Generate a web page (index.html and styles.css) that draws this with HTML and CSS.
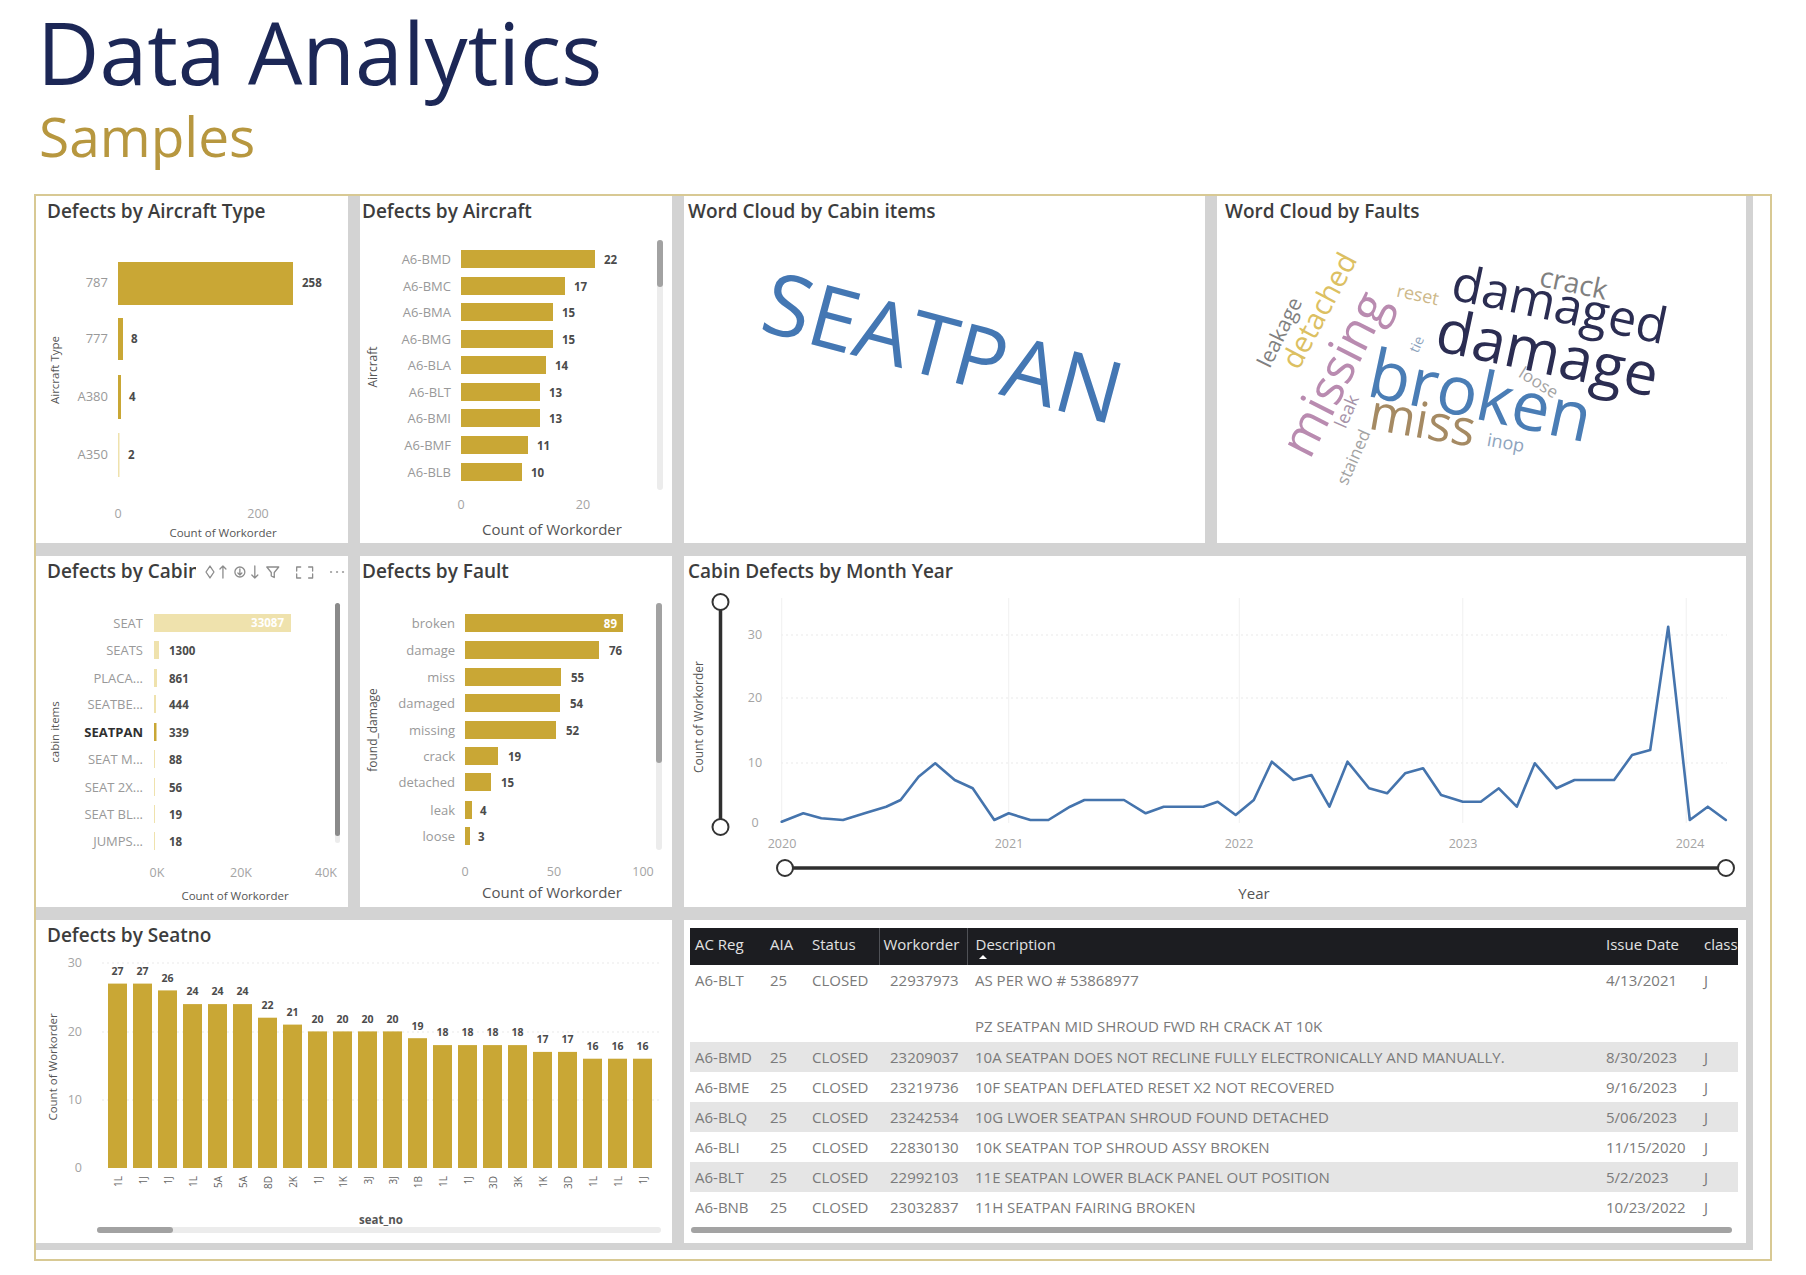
FILE: index.html
```html
<!DOCTYPE html>
<html lang="en">
<head>
<meta charset="utf-8">
<title>Data Analytics – Samples</title>
<link rel="stylesheet" href="styles.css">
</head>
<body>
<header class="page-head">
  <h1 class="title">Data Analytics</h1>
  <h2 class="subtitle">Samples</h2>
</header>

<main class="frame">
  <div class="board">

    <!-- Defects by Aircraft Type -->
    <section class="panel">
      <h3 class="ptitle pad-l">Defects by Aircraft Type</h3>
      <svg class="chart" viewBox="0 30 312 317">
        <rect class="bar" x="82" y="66" width="175" height="43"/>
        <rect class="bar" x="82" y="122" width="5" height="42"/>
        <rect class="bar" x="82" y="179" width="3" height="44"/>
        <rect class="bar pale" x="82" y="237" width="1.5" height="44"/>
        <text class="c-lbl" x="72" y="91" text-anchor="end">787</text>
        <text class="c-lbl" x="72" y="147" text-anchor="end">777</text>
        <text class="c-lbl" x="72" y="205" text-anchor="end">A380</text>
        <text class="c-lbl" x="72" y="263" text-anchor="end">A350</text>
        <text class="c-val" x="266" y="91">258</text>
        <text class="c-val" x="95" y="147">8</text>
        <text class="c-val" x="93" y="205">4</text>
        <text class="c-val" x="92" y="263">2</text>
        <text class="c-ax" x="82" y="322" text-anchor="middle">0</text>
        <text class="c-ax" x="222" y="322" text-anchor="middle">200</text>
        <text class="c-axt sm" x="187" y="341" text-anchor="middle">Count of Workorder</text>
        <text class="c-axt sm" transform="translate(23 174) rotate(-90)" text-anchor="middle">Aircraft Type</text>
      </svg>
    </section>

    <!-- Defects by Aircraft -->
    <section class="panel">
      <h3 class="ptitle pad-s">Defects by Aircraft</h3>
      <svg class="chart" viewBox="0 30 312 317">
        <rect class="bar" x="101" y="54" width="134" height="18"/>
        <rect class="bar" x="101" y="81" width="104" height="18"/>
        <rect class="bar" x="101" y="107" width="92" height="18"/>
        <rect class="bar" x="101" y="134" width="92" height="18"/>
        <rect class="bar" x="101" y="160" width="85" height="18"/>
        <rect class="bar" x="101" y="187" width="79" height="18"/>
        <rect class="bar" x="101" y="213" width="79" height="18"/>
        <rect class="bar" x="101" y="240" width="67" height="18"/>
        <rect class="bar" x="101" y="267" width="61" height="18"/>
        <text class="c-lbl" x="91" y="67.5" text-anchor="end">A6-BMD</text>
        <text class="c-lbl" x="91" y="94.5" text-anchor="end">A6-BMC</text>
        <text class="c-lbl" x="91" y="120.5" text-anchor="end">A6-BMA</text>
        <text class="c-lbl" x="91" y="147.5" text-anchor="end">A6-BMG</text>
        <text class="c-lbl" x="91" y="173.5" text-anchor="end">A6-BLA</text>
        <text class="c-lbl" x="91" y="200.5" text-anchor="end">A6-BLT</text>
        <text class="c-lbl" x="91" y="226.5" text-anchor="end">A6-BMI</text>
        <text class="c-lbl" x="91" y="253.5" text-anchor="end">A6-BMF</text>
        <text class="c-lbl" x="91" y="280.5" text-anchor="end">A6-BLB</text>
        <text class="c-val" x="244" y="67.5">22</text>
        <text class="c-val" x="214" y="94.5">17</text>
        <text class="c-val" x="202" y="120.5">15</text>
        <text class="c-val" x="202" y="147.5">15</text>
        <text class="c-val" x="195" y="173.5">14</text>
        <text class="c-val" x="189" y="200.5">13</text>
        <text class="c-val" x="189" y="226.5">13</text>
        <text class="c-val" x="177" y="253.5">11</text>
        <text class="c-val" x="171" y="280.5">10</text>
        <text class="c-ax" x="101" y="313" text-anchor="middle">0</text>
        <text class="c-ax" x="223" y="313" text-anchor="middle">20</text>
        <text class="c-axt lg" x="192" y="339" text-anchor="middle">Count of Workorder</text>
        <text class="c-axt" transform="translate(17 171) rotate(-90)" text-anchor="middle">Aircraft</text>
        <rect class="track" x="297" y="44" width="6" height="250" rx="3"/>
        <rect class="thumb" x="297" y="44" width="6" height="47" rx="3"/>
      </svg>
    </section>

    <!-- Word Cloud by Cabin items -->
    <section class="panel">
      <h3 class="ptitle">Word Cloud by Cabin items</h3>
      <svg class="chart wc" viewBox="0 30 521 317">
        <text class="w-seat" transform="translate(260 149) rotate(15)">SEATPAN</text>
      </svg>
    </section>

    <!-- Word Cloud by Faults -->
    <section class="panel">
      <h3 class="ptitle pad-m">Word Cloud by Faults</h3>
      <svg class="chart wc" viewBox="0 30 529 317">
        <text class="w navy" font-size="50" transform="translate(343 107) rotate(12)">damaged</text>
        <text class="w navy" font-size="60" transform="translate(331 155) rotate(12)">damage</text>
        <text class="w blue" font-size="68" transform="translate(264 197) rotate(12)">broken</text>
        <text class="w pink" font-size="50" transform="translate(116 177) rotate(-63)">missing</text>
        <text class="w gold" font-size="29" transform="translate(101 114) rotate(-62)">detached</text>
        <text class="w grey" font-size="21" transform="translate(62 136) rotate(-64)">leakage</text>
        <text class="w grey" font-size="28" transform="translate(357 86) rotate(12)">crack</text>
        <text class="w sand" font-size="18" transform="translate(201 98) rotate(12)">reset</text>
        <text class="w tan" font-size="50" transform="translate(206 223) rotate(10)">miss</text>
        <text class="w lgrey" font-size="17" transform="translate(322 186) rotate(32)">loose</text>
        <text class="w steel" font-size="18" transform="translate(289 246) rotate(10)">inop</text>
        <text class="w mauve" font-size="18" transform="translate(129 215) rotate(-66)">leak</text>
        <text class="w lgrey" font-size="17" transform="translate(136 261) rotate(-66)">stained</text>
        <text class="w steel" font-size="14" transform="translate(199 148) rotate(-66)">tie</text>
      </svg>
    </section>

    <!-- Defects by Cabin items -->
    <section class="panel">
      <div class="ptitle pad-l vhead">
        <h3 class="clip">Defects by Cabin items</h3>
        <svg class="vh-icons" viewBox="0 0 145 20" width="145" height="20">
          <g fill="none" stroke="#8c8c8c" stroke-width="1.3" stroke-linecap="round" stroke-linejoin="round">
            <path d="M6 4 L10 10 L6 16 L2 10 Z"/>
            <path d="M19 16 V4 M16 7 L19 4 L22 7"/>
            <circle cx="36" cy="10" r="5"/>
            <path d="M36 7 V13 M34 11 L36 13 L38 11"/>
            <path d="M51 4 V16 M48 13 L51 16 L54 13"/>
            <path d="M63 5 H75 L70.5 10.5 V15.5 L67.5 14 V10.5 Z"/>
            <path d="M97 5 H93 V9 M105 5 H109 V9 M97 16 H93 V12 M105 16 H109 V12"/>
            <path d="M127 10 H128 M133 10 H134 M139 10 H140"/>
          </g>
        </svg>
      </div>
      <svg class="chart" viewBox="0 30 312 321">
        <rect class="bar pale" x="118" y="58" width="137" height="18"/>
        <rect class="bar pale" x="118" y="85" width="5" height="18"/>
        <rect class="bar pale" x="118" y="113" width="3" height="18"/>
        <rect class="bar pale" x="118" y="139" width="2" height="18"/>
        <rect class="bar" x="118" y="167" width="2.5" height="18"/>
        <rect class="bar pale" x="118" y="194" width="1" height="18"/>
        <rect class="bar pale" x="118" y="222" width="1" height="18"/>
        <rect class="bar pale" x="118" y="249" width="1" height="18"/>
        <rect class="bar pale" x="118" y="276" width="1" height="18"/>
        <text class="c-val in" x="248" y="71" text-anchor="end">33087</text>
        <text class="c-lbl" x="107" y="71.5" text-anchor="end">SEAT</text>
        <text class="c-lbl" x="107" y="98.5" text-anchor="end">SEATS</text>
        <text class="c-lbl" x="107" y="126.5" text-anchor="end">PLACA...</text>
        <text class="c-lbl" x="107" y="152.5" text-anchor="end">SEATBE...</text>
        <text class="c-lbl strong" x="107" y="180.5" text-anchor="end">SEATPAN</text>
        <text class="c-lbl" x="107" y="207.5" text-anchor="end">SEAT M...</text>
        <text class="c-lbl" x="107" y="235.5" text-anchor="end">SEAT 2X...</text>
        <text class="c-lbl" x="107" y="262.5" text-anchor="end">SEAT BL...</text>
        <text class="c-lbl" x="107" y="289.5" text-anchor="end">JUMPS...</text>
        <text class="c-val" x="133" y="98.5">1300</text>
        <text class="c-val" x="133" y="126.5">861</text>
        <text class="c-val" x="133" y="152.5">444</text>
        <text class="c-val" x="133" y="180.5">339</text>
        <text class="c-val" x="133" y="207.5">88</text>
        <text class="c-val" x="133" y="235.5">56</text>
        <text class="c-val" x="133" y="262.5">19</text>
        <text class="c-val" x="133" y="289.5">18</text>
        <text class="c-ax" x="121" y="321" text-anchor="middle">0K</text>
        <text class="c-ax" x="205" y="321" text-anchor="middle">20K</text>
        <text class="c-ax" x="290" y="321" text-anchor="middle">40K</text>
        <text class="c-axt sm" x="199" y="344" text-anchor="middle">Count of Workorder</text>
        <text class="c-axt sm" transform="translate(23 176) rotate(-90)" text-anchor="middle">cabin items</text>
        <rect class="track" x="299" y="47" width="5" height="240" rx="2.5"/>
        <rect class="thumb dark" x="299" y="47" width="5" height="233" rx="2.5"/>
      </svg>
    </section>

    <!-- Defects by Fault -->
    <section class="panel">
      <h3 class="ptitle pad-s">Defects by Fault</h3>
      <svg class="chart" viewBox="0 30 312 321">
        <rect class="bar" x="105" y="58" width="158" height="18"/>
        <rect class="bar" x="105" y="85" width="134" height="18"/>
        <rect class="bar" x="105" y="112" width="96" height="18"/>
        <rect class="bar" x="105" y="138" width="95" height="18"/>
        <rect class="bar" x="105" y="165" width="91" height="18"/>
        <rect class="bar" x="105" y="191" width="33" height="18"/>
        <rect class="bar" x="105" y="217" width="26" height="18"/>
        <rect class="bar" x="105" y="245" width="7" height="18"/>
        <rect class="bar" x="105" y="271" width="5" height="18"/>
        <text class="c-lbl" x="95" y="71.5" text-anchor="end">broken</text>
        <text class="c-lbl" x="95" y="98.5" text-anchor="end">damage</text>
        <text class="c-lbl" x="95" y="125.5" text-anchor="end">miss</text>
        <text class="c-lbl" x="95" y="151.5" text-anchor="end">damaged</text>
        <text class="c-lbl" x="95" y="178.5" text-anchor="end">missing</text>
        <text class="c-lbl" x="95" y="204.5" text-anchor="end">crack</text>
        <text class="c-lbl" x="95" y="230.5" text-anchor="end">detached</text>
        <text class="c-lbl" x="95" y="258.5" text-anchor="end">leak</text>
        <text class="c-lbl" x="95" y="284.5" text-anchor="end">loose</text>
        <text class="c-val in" x="257" y="71.5" text-anchor="end">89</text>
        <text class="c-val" x="249" y="98.5">76</text>
        <text class="c-val" x="211" y="125.5">55</text>
        <text class="c-val" x="210" y="151.5">54</text>
        <text class="c-val" x="206" y="178.5">52</text>
        <text class="c-val" x="148" y="204.5">19</text>
        <text class="c-val" x="141" y="230.5">15</text>
        <text class="c-val" x="120" y="258.5">4</text>
        <text class="c-val" x="118" y="284.5">3</text>
        <text class="c-ax" x="105" y="320" text-anchor="middle">0</text>
        <text class="c-ax" x="194" y="320" text-anchor="middle">50</text>
        <text class="c-ax" x="283" y="320" text-anchor="middle">100</text>
        <text class="c-axt lg" x="192" y="342" text-anchor="middle">Count of Workorder</text>
        <text class="c-axt" transform="translate(17 174) rotate(-90)" text-anchor="middle">found_damage</text>
        <rect class="track" x="296" y="47" width="6" height="247" rx="3"/>
        <rect class="thumb" x="296" y="47" width="6" height="160" rx="3"/>
      </svg>
    </section>

    <!-- Cabin Defects by Month Year -->
    <section class="panel span2">
      <h3 class="ptitle">Cabin Defects by Month Year</h3>
      <svg class="chart" viewBox="3 28 1062 321">
        <g class="grid">
          <line x1="100" y1="77" x2="1046" y2="77"/>
          <line x1="100" y1="140" x2="1046" y2="140"/>
          <line x1="100" y1="205" x2="1046" y2="205"/>
        </g>
        <g class="vgrid">
          <line x1="100.7" y1="40" x2="100.7" y2="265"/>
          <line x1="327.7" y1="40" x2="327.7" y2="265"/>
          <line x1="558.3" y1="40" x2="558.3" y2="265"/>
          <line x1="781.8" y1="40" x2="781.8" y2="265"/>
          <line x1="1005.2" y1="40" x2="1005.2" y2="265"/>
        </g>
        <text class="c-ax" x="74" y="81" text-anchor="middle">30</text>
        <text class="c-ax" x="74" y="144" text-anchor="middle">20</text>
        <text class="c-ax" x="74" y="209" text-anchor="middle">10</text>
        <text class="c-ax" x="74" y="269" text-anchor="middle">0</text>
        <text class="c-ax" x="101" y="290" text-anchor="middle">2020</text>
        <text class="c-ax" x="328" y="290" text-anchor="middle">2021</text>
        <text class="c-ax" x="558" y="290" text-anchor="middle">2022</text>
        <text class="c-ax" x="782" y="290" text-anchor="middle">2023</text>
        <text class="c-ax" x="1009" y="290" text-anchor="middle">2024</text>
        <text class="c-axt" transform="translate(22 159) rotate(-90)" text-anchor="middle">Count of Workorder</text>
        <polyline class="trend" points="100.7,263.7 122.3,255.3 140.3,260.3 162,262 183.6,255.3 205.2,248.7 219.6,242 237.6,218.7 254.2,205.3 273.7,222 291.7,230.3 313.3,262 327.7,255.3 349.4,262 367.4,262 389,248.7 403.4,242 421.4,242 443,242 464.7,255.3 482.7,248.7 500.7,248.7 522.3,248.7 536.7,243.7 554.7,257 572.8,242 590.8,203.7 612.4,222 630.4,217 648.4,248.7 666.5,203.7 688.1,230.3 706.1,235.3 724.1,215.3 742.1,210.3 760.1,237 781.8,243.7 799.8,243.7 817.8,230.3 835.8,248.7 853.8,205.3 875.5,230.3 893.5,222 911.5,222 933.1,222 951.1,197 969.2,192 987.2,68.7 1008.8,262 1026.8,248.7 1044.8,262"/>
        <line class="slider" x1="39.5" y1="44" x2="39.5" y2="269"/>
        <circle class="knob" cx="39.5" cy="44" r="8"/>
        <circle class="knob" cx="39.5" cy="269" r="8"/>
        <line class="slider" x1="104" y1="310" x2="1045" y2="310"/>
        <circle class="knob" cx="104" cy="310" r="8"/>
        <circle class="knob" cx="1045" cy="310" r="8"/>
        <text class="c-axt lg" x="573" y="341" text-anchor="middle">Year</text>
      </svg>
    </section>

    <!-- Defects by Seatno -->
    <section class="panel span2a">
      <h3 class="ptitle pad-l">Defects by Seatno</h3>
      <svg class="chart" viewBox="0 30 636 293">
        <g class="grid">
          <line x1="66" y1="43" x2="625" y2="43"/>
          <line x1="66" y1="112" x2="625" y2="112"/>
          <line x1="66" y1="180" x2="625" y2="180"/>
        </g>
        <text class="c-ax" x="46" y="47" text-anchor="end">30</text>
        <text class="c-ax" x="46" y="116" text-anchor="end">20</text>
        <text class="c-ax" x="46" y="184" text-anchor="end">10</text>
        <text class="c-ax" x="46" y="252" text-anchor="end">0</text>
        <g class="bars">
          <rect class="bar" x="72" y="63.6" width="19" height="184.4"/>
          <rect class="bar" x="97" y="63.6" width="19" height="184.4"/>
          <rect class="bar" x="122" y="70.4" width="19" height="177.6"/>
          <rect class="bar" x="147" y="84.1" width="19" height="163.9"/>
          <rect class="bar" x="172" y="84.1" width="19" height="163.9"/>
          <rect class="bar" x="197" y="84.1" width="19" height="163.9"/>
          <rect class="bar" x="222" y="97.7" width="19" height="150.3"/>
          <rect class="bar" x="247" y="104.6" width="19" height="143.4"/>
          <rect class="bar" x="272" y="111.4" width="19" height="136.6"/>
          <rect class="bar" x="297" y="111.4" width="19" height="136.6"/>
          <rect class="bar" x="322" y="111.4" width="19" height="136.6"/>
          <rect class="bar" x="347" y="111.4" width="19" height="136.6"/>
          <rect class="bar" x="372" y="118.2" width="19" height="129.8"/>
          <rect class="bar" x="397" y="125.1" width="19" height="122.9"/>
          <rect class="bar" x="422" y="125.1" width="19" height="122.9"/>
          <rect class="bar" x="447" y="125.1" width="19" height="122.9"/>
          <rect class="bar" x="472" y="125.1" width="19" height="122.9"/>
          <rect class="bar" x="497" y="131.9" width="19" height="116.1"/>
          <rect class="bar" x="522" y="131.9" width="19" height="116.1"/>
          <rect class="bar" x="547" y="138.7" width="19" height="109.3"/>
          <rect class="bar" x="572" y="138.7" width="19" height="109.3"/>
          <rect class="bar" x="597" y="138.7" width="19" height="109.3"/>
        </g>
        <g class="c-val sm" text-anchor="middle">
          <text x="81.5" y="55">27</text>
          <text x="106.5" y="55">27</text>
          <text x="131.5" y="62">26</text>
          <text x="156.5" y="75">24</text>
          <text x="181.5" y="75">24</text>
          <text x="206.5" y="75">24</text>
          <text x="231.5" y="89">22</text>
          <text x="256.5" y="96">21</text>
          <text x="281.5" y="103">20</text>
          <text x="306.5" y="103">20</text>
          <text x="331.5" y="103">20</text>
          <text x="356.5" y="103">20</text>
          <text x="381.5" y="110">19</text>
          <text x="406.5" y="116">18</text>
          <text x="431.5" y="116">18</text>
          <text x="456.5" y="116">18</text>
          <text x="481.5" y="116">18</text>
          <text x="506.5" y="123">17</text>
          <text x="531.5" y="123">17</text>
          <text x="556.5" y="130">16</text>
          <text x="581.5" y="130">16</text>
          <text x="606.5" y="130">16</text>
        </g>
        <g class="c-tick" text-anchor="end">
          <text transform="translate(85.5 256) rotate(-90)">1L</text>
          <text transform="translate(110.5 256) rotate(-90)">1J</text>
          <text transform="translate(135.5 256) rotate(-90)">1J</text>
          <text transform="translate(160.5 256) rotate(-90)">1L</text>
          <text transform="translate(185.5 256) rotate(-90)">5A</text>
          <text transform="translate(210.5 256) rotate(-90)">5A</text>
          <text transform="translate(235.5 256) rotate(-90)">8D</text>
          <text transform="translate(260.5 256) rotate(-90)">2K</text>
          <text transform="translate(285.5 256) rotate(-90)">1J</text>
          <text transform="translate(310.5 256) rotate(-90)">1K</text>
          <text transform="translate(335.5 256) rotate(-90)">3J</text>
          <text transform="translate(360.5 256) rotate(-90)">3J</text>
          <text transform="translate(385.5 256) rotate(-90)">1B</text>
          <text transform="translate(410.5 256) rotate(-90)">1L</text>
          <text transform="translate(435.5 256) rotate(-90)">1J</text>
          <text transform="translate(460.5 256) rotate(-90)">3D</text>
          <text transform="translate(485.5 256) rotate(-90)">3K</text>
          <text transform="translate(510.5 256) rotate(-90)">1K</text>
          <text transform="translate(535.5 256) rotate(-90)">3D</text>
          <text transform="translate(560.5 256) rotate(-90)">1L</text>
          <text transform="translate(585.5 256) rotate(-90)">1L</text>
          <text transform="translate(610.5 256) rotate(-90)">1J</text>
        </g>
        <text class="c-axt sm bold" x="345" y="304" text-anchor="middle">seat_no</text>
        <text class="c-axt sm" transform="translate(21 147) rotate(-90)" text-anchor="middle">Count of Workorder</text>
        <rect class="track" x="61" y="307" width="564" height="6" rx="3"/>
        <rect class="thumb" x="61" y="307" width="76" height="6" rx="3"/>
      </svg>
    </section>

    <!-- Work order table -->
    <section class="panel span2 tpanel">
      <table class="wo">
        <colgroup>
          <col class="w-reg"><col class="w-aia"><col class="w-status"><col class="w-wo"><col class="w-desc"><col class="w-date"><col class="w-cls">
        </colgroup>
        <thead>
          <tr><th>AC Reg</th><th>AIA</th><th>Status</th><th class="sep">Workorder</th><th class="sep sorted">Description</th><th>Issue Date</th><th>class</th></tr>
        </thead>
        <tbody>
          <tr class="tall"><td>A6-BLT</td><td>25</td><td>CLOSED</td><td>22937973</td><td>AS PER WO # 53868977<br><br>PZ SEATPAN MID SHROUD FWD RH CRACK AT 10K</td><td>4/13/2021</td><td>J</td></tr>
          <tr class="alt"><td>A6-BMD</td><td>25</td><td>CLOSED</td><td>23209037</td><td>10A SEATPAN DOES NOT RECLINE FULLY ELECTRONICALLY AND MANUALLY.</td><td>8/30/2023</td><td>J</td></tr>
          <tr><td>A6-BME</td><td>25</td><td>CLOSED</td><td>23219736</td><td>10F SEATPAN DEFLATED RESET X2 NOT RECOVERED</td><td>9/16/2023</td><td>J</td></tr>
          <tr class="alt"><td>A6-BLQ</td><td>25</td><td>CLOSED</td><td>23242534</td><td>10G LWOER SEATPAN SHROUD FOUND DETACHED</td><td>5/06/2023</td><td>J</td></tr>
          <tr><td>A6-BLI</td><td>25</td><td>CLOSED</td><td>22830130</td><td>10K SEATPAN TOP SHROUD ASSY BROKEN</td><td>11/15/2020</td><td>J</td></tr>
          <tr class="alt"><td>A6-BLT</td><td>25</td><td>CLOSED</td><td>22992103</td><td>11E SEATPAN LOWER BLACK PANEL OUT POSITION</td><td>5/2/2023</td><td>J</td></tr>
          <tr><td>A6-BNB</td><td>25</td><td>CLOSED</td><td>23032837</td><td>11H SEATPAN FAIRING BROKEN</td><td>10/23/2022</td><td>J</td></tr>
        </tbody>
      </table>
      <div class="hscroll"></div>
    </section>

  </div>
</main>
</body>
</html>
```

FILE: styles.css
```css
html, body {
  margin: 0;
  padding: 0;
  background: #ffffff;
}

body {
  width: 1806px;
  height: 1275px;
  overflow: hidden;
  font-family: "Open Sans", "Noto Sans", "Liberation Sans", sans-serif;
}

/* ---------- page heading ---------- */
.page-head {
  box-sizing: border-box;
  height: 194px;
  padding: 9px 0 0 37px;
}

.title {
  margin: 0;
  font-size: 86px;
  line-height: 86px;
  font-weight: 400;
  color: #1c2756;
}

.subtitle {
  margin: 13px 0 0 2px;
  font-size: 55px;
  line-height: 55px;
  font-weight: 400;
  color: #b7973f;
}

/* ---------- dashboard frame ---------- */
.frame {
  display: block;
  box-sizing: border-box;
  margin-left: 34px;
  width: 1738px;
  height: 1067px;
  border: 2px solid #d8c994;
  background: #ffffff;
}

.board {
  display: grid;
  grid-template-columns: 312px 312px 521px 529px;
  grid-template-rows: 347px 351px 323px;
  gap: 13px 12px;
  padding: 0 7px 7px 0;
  width: max-content;
  background: #d3d3d3;
}

.panel {
  display: flex;
  flex-direction: column;
  min-width: 0;
  min-height: 0;
  overflow: hidden;
  background: #ffffff;
}

.span2 { grid-column: 3 / 5; }
.span2a { grid-column: 1 / 3; }

.ptitle {
  box-sizing: border-box;
  flex: none;
  height: 30px;
  margin: 0;
  padding: 4px 0 0 4px;
  font-size: 19px;
  line-height: 22px;
  font-weight: 600;
  color: #3d3d3d;
  white-space: nowrap;
}

.pad-l { padding-left: 11px; }
.pad-s { padding-left: 2px; }
.pad-m { padding-left: 8px; }

.vhead {
  display: flex;
  align-items: flex-start;
}

.vhead .clip {
  margin: 0;
  width: 149px;
  margin-right: 8px;
  overflow: hidden;
  font-size: inherit;
  font-weight: inherit;
  line-height: inherit;
}

.vh-icons {
  display: block;
  margin-top: 2px;
}

/* ---------- chart drawings ---------- */
.chart {
  display: block;
  flex: 1 1 auto;
  width: 100%;
  min-height: 0;
}

.chart text { font-family: "Open Sans", "Noto Sans", sans-serif; }

.bar { fill: #c9a735; }
.bar.pale { fill: #efe2ad; }

.c-lbl { font-size: 13px; fill: #999999; }
.c-lbl.strong { fill: #2f2f2f; font-weight: 700; }

.c-val { font-size: 11.5px; font-weight: 700; fill: #4b4b4b; }
.c-val.in { fill: #ffffff; }
.c-val.sm { font-size: 10.5px; }

.c-ax { font-size: 12.5px; fill: #a4a4a4; }
.c-tick { font-size: 10px; fill: #666666; }

.c-axt { font-size: 12px; fill: #555555; }
.c-axt.sm { font-size: 11.5px; }
.c-axt.lg { font-size: 15px; }
.c-axt.bold { font-weight: 700; }

.track { fill: #ececec; }
.thumb { fill: #a2a2a2; }
.thumb.dark { fill: #8a8a8a; }

.grid line {
  stroke: #e9e9e9;
  stroke-width: 1;
  stroke-dasharray: 2 3;
}

.vgrid line {
  stroke: #f0f0f0;
  stroke-width: 1;
}

.trend {
  fill: none;
  stroke: #4574ad;
  stroke-width: 2.6;
  stroke-linejoin: round;
  stroke-linecap: round;
}

.slider {
  stroke: #2f2f2f;
  stroke-width: 3.5;
}

.knob {
  fill: #ffffff;
  stroke: #333333;
  stroke-width: 2;
}

/* ---------- word clouds ---------- */
.wc text {
  font-family: "Open Sans", "Noto Sans", sans-serif;
  text-anchor: middle;
  dominant-baseline: central;
}

.w-seat {
  font-size: 86px;
  font-weight: 400;
  fill: #4477b3;
}

.w.navy { fill: #2b2d52; }
.w.blue { fill: #4a7db5; }
.w.pink { fill: #b98bb0; }
.w.gold { fill: #dcc062; }
.w.grey { fill: #808080; }
.w.lgrey { fill: #a3a3a3; }
.w.sand { fill: #cdb889; }
.w.tan { fill: #a58a63; }
.w.steel { fill: #8ea4bd; }
.w.mauve { fill: #a592a8; }

/* ---------- work order table ---------- */
.tpanel {
  padding: 8px 8px 0 6px;
}

.wo {
  width: 1048px;
  table-layout: fixed;
  border-collapse: collapse;
  border-spacing: 0;
  font-size: 15px;
}

.w-reg { width: 75px; }
.w-aia { width: 42px; }
.w-status { width: 72px; }
.w-wo { width: 88px; }
.w-desc { width: 631px; }
.w-date { width: 96px; }
.w-cls { width: 44px; }

.wo th {
  position: relative;
  padding: 5px 0 10px 5px;
  line-height: 22px;
  font-weight: 400;
  text-align: left;
  color: #e2e2e2;
  background: #1c1d21;
  white-space: nowrap;
  overflow: hidden;
}

.wo th.sep { border-left: 1px solid #4f5156; }
.wo th:nth-child(4) { padding-left: 4px; }
.wo th:nth-child(5) { padding-left: 8px; }
.wo th:nth-child(6) { padding-left: 8px; }
.wo th:nth-child(7) { padding-left: 10px; }

.wo th.sorted::after {
  content: "";
  position: absolute;
  left: 11px;
  top: 27px;
  border-left: 4px solid transparent;
  border-right: 4px solid transparent;
  border-bottom: 4px solid #ffffff;
}

.wo td {
  padding: 4px 0 4px 5px;
  line-height: 22px;
  color: #7a7a7a;
  vertical-align: top;
  white-space: nowrap;
  overflow: hidden;
}

.wo td:nth-child(4) { padding-left: 11px; }
.wo td:nth-child(5) { padding-left: 8px; }
.wo td:nth-child(6) { padding-left: 8px; }
.wo td:nth-child(7) { padding-left: 10px; }

.wo tr.tall td { line-height: 23px; }
.wo tr.alt td { background: #e5e5e5; }

.hscroll {
  margin: 5px 0 0 1px;
  width: 1041px;
  height: 6px;
  border-radius: 3px;
  background: #a3a3a3;
}
```
